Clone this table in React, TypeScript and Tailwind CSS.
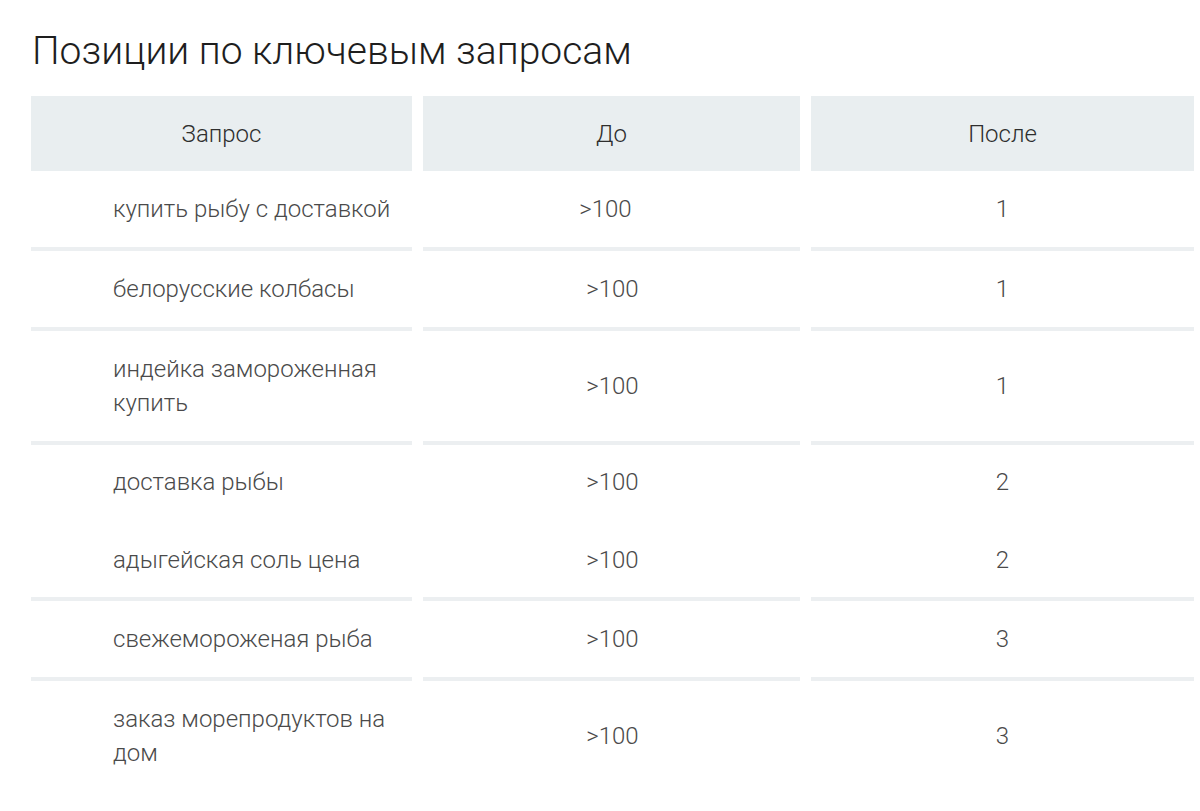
// Positions table: keyword queries, before / after.
const rows = [
  { query: "купить рыбу с доставкой", before: ">100", after: "1", first: true, line: true, tight: false },
  { query: "белорусские колбасы", before: ">100", after: "1", line: true, tight: false },
  { query: "индейка замороженная купить", before: ">100", after: "1", line: true, tight: false },
  { query: "доставка рыбы", before: ">100", after: "2", line: false, tight: true },
  { query: "адыгейская соль цена", before: ">100", after: "2", line: true, tight: true },
  { query: "свежемороженая рыба", before: ">100", after: "3", line: true, tight: false },
  { query: "заказ морепродуктов на дом", before: ">100", after: "3", line: false, tight: false },
];

export default function App() {
  return (
    <div
      className="min-h-[811px] w-[1200px] bg-white pl-[31px] text-[#4a4a4a]"
      style={{ fontFamily: "Roboto, 'Liberation Sans', sans-serif" }}
    >
      <h1 className="pt-[27px] pl-[1px] text-[39px] leading-[48px] font-light text-[#1e1e1e]">
        Позиции по ключевым запросам
      </h1>

      <div className="mt-[21px] grid grid-cols-[381px_377px_383px] gap-x-[11px]">
        {/* header */}
        <div className="flex h-[75px] items-center justify-center bg-[#e9eef0] text-[24px] font-light text-[#2e2e2e]">
          Запрос
        </div>
        <div className="flex h-[75px] items-center justify-center bg-[#e9eef0] text-[24px] font-light text-[#2e2e2e]">
          До
        </div>
        <div className="flex h-[75px] items-center justify-center bg-[#e9eef0] text-[24px] font-light text-[#2e2e2e]">
          После
        </div>

        {rows.map((r) => {
          const cell =
            (r.tight ? "py-[20px] " : "py-[21px] ") +
            (r.line ? "border-b-4 border-[#eceff1]" : "border-b-4 border-transparent");
          return (
            <div key={r.query} className="contents">
              <div className={cell + " flex items-center pl-[82px] pr-[10px]"}>
                <span className="w-[285px] text-[24px] leading-[34px] font-light">{r.query}</span>
              </div>
              <div className={cell + " flex items-center justify-center"}>
                <span
                  className={
                    "text-[24px] leading-[34px] font-light " + (r.first ? "pr-[12px]" : "pl-[2px]")
                  }
                >
                  {r.before}
                </span>
              </div>
              <div className={cell + " flex items-center justify-center"}>
                <span className="text-[24px] leading-[34px] font-light">{r.after}</span>
              </div>
            </div>
          );
        })}
      </div>
    </div>
  );
}
